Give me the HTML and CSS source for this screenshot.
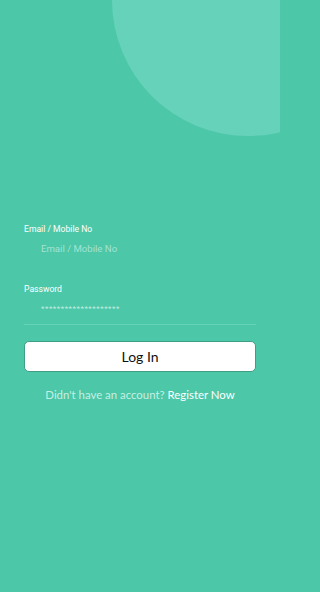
FILE: index.html
```html
<!DOCTYPE html>
<html>
<head>
<meta charset="utf-8">
<link rel="stylesheet" href="styles.css">
</head>
<body>
<div class="screen">
  <div class="blob"></div>
  <form class="form">
    <label class="field">
      <span class="label">Email / Mobile No</span>
      <span class="input placeholder">Email / Mobile No</span>
    </label>
    <label class="field">
      <span class="label">Password</span>
      <span class="input stars">********************</span>
    </label>
    <div class="divider"></div>
    <button type="button" class="btn">Log In</button>
    <p class="register">Didn't have an account? <span class="link">Register Now</span></p>
  </form>
</div>
</body>
</html>
```
FILE: styles.css
```css
html, body {
  margin: 0;
  padding: 0;
  background: #4cc7a7;
}
body {
  min-height: 592px;
  overflow: hidden;
}
.screen {
  position: relative;
  width: 280px;
  height: 592px;
  overflow: hidden;
  background: #4cc7a7;
  font-family: Roboto, "Liberation Sans", sans-serif;
}
.blob {
  position: absolute;
  left: 112px;
  top: -136px;
  width: 272px;
  height: 272px;
  border-radius: 50%;
  background: #66d2ba;
}
.form {
  position: relative;
  display: flex;
  flex-direction: column;
  padding: 223px 24px 0 24px;
  margin: 0;
}
.field {
  display: flex;
  flex-direction: column;
}
.label {
  color: #ffffff;
  font-size: 8.6px;
  line-height: 12px;
}
.input {
  padding-left: 17px;
  font-size: 9.6px;
  line-height: 14px;
  margin-top: 7px;
  height: 41px;
}
.placeholder {
  color: #a3e3d3;
}
.stars {
  color: #c2ece0;
  font-size: 8px;
  letter-spacing: 0.5px;
  line-height: 14px;
  height: 22px;
}
.divider {
  height: 1px;
  background: #66d2ba;
}
.btn {
  margin-top: 16px;
  height: 31px;
  border: 1px solid #3f9e86;
  border-radius: 5px;
  background: #ffffff;
  color: #111111;
  font-family: Lato, "Open Sans", sans-serif;
  font-size: 14px;
  padding: 0;
}
.register {
  margin: 16px 0 0 0;
  text-align: center;
  font-family: Lato, "Open Sans", sans-serif;
  font-size: 11.4px;
  color: #c6efe4;
}
.link {
  color: #ffffff;
}
```
